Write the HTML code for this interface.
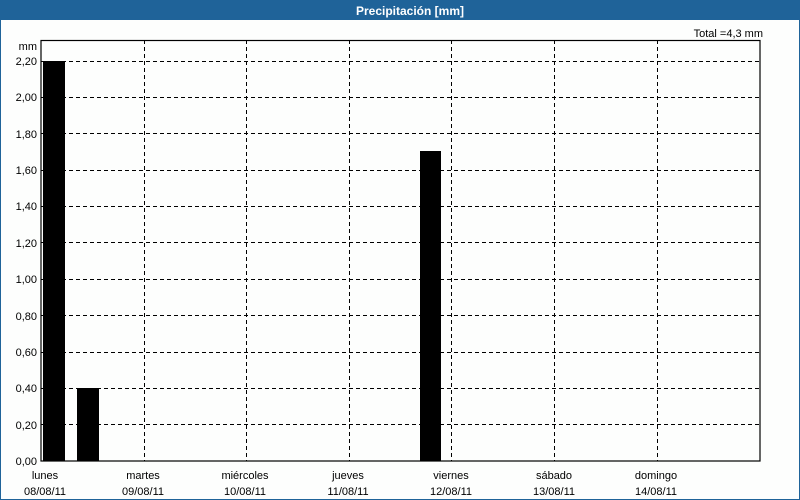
<!DOCTYPE html>
<html><head><style>
html,body{margin:0;padding:0;background:#fff}
svg{display:block}
text{font-family:"Liberation Sans",sans-serif;font-size:11px;fill:#000}
</style></head><body>
<svg width="800" height="500" xmlns="http://www.w3.org/2000/svg">
<rect x="0" y="0" width="800" height="500" fill="#1f6399"/>
<rect x="1" y="20" width="798" height="479" fill="#fdfefd"/>
<text x="410" y="15" text-anchor="middle" style="fill:#fff;font-weight:bold;font-size:12px">Precipitación [mm]</text>
<text x="763" y="37" text-anchor="end">Total =4,3 mm</text>
<text x="37" y="50" text-anchor="end">mm</text>
<g stroke="#000" stroke-width="1" stroke-dasharray="4,3" fill="none">
<path d="M41 61.5H760M41 97.5H760M41 133.5H760M41 170.5H760M41 206.5H760M41 242.5H760M41 279.5H760M41 315.5H760M41 352.5H760M41 388.5H760M41 424.5H760"/>
<path d="M144.5 40V461M246.5 40V461M349.5 40V461M451.5 40V461M554.5 40V461M657.5 40V461"/>
</g>
<g fill="#000">
<rect x="43" y="61" width="22" height="400"/>
<rect x="77" y="388" width="22" height="73"/>
<rect x="420" y="151" width="21" height="310"/>
</g>
<rect x="41" y="40.5" width="719" height="420.5" fill="none" stroke="#000" stroke-width="1.2"/>
<g text-anchor="end">
<text x="37" y="65">2,20</text><text x="37" y="101">2,00</text><text x="37" y="138">1,80</text>
<text x="37" y="174">1,60</text><text x="37" y="210">1,40</text><text x="37" y="247">1,20</text>
<text x="37" y="283">1,00</text><text x="37" y="320">0,80</text><text x="37" y="356">0,60</text>
<text x="37" y="392">0,40</text><text x="37" y="429">0,20</text><text x="37" y="465">0,00</text>
</g>
<g text-anchor="middle">
<text x="45" y="479">lunes</text><text x="45" y="495">08/08/11</text>
<text x="143" y="479">martes</text><text x="143" y="495">09/08/11</text>
<text x="245" y="479">miércoles</text><text x="245" y="495">10/08/11</text>
<text x="348" y="479">jueves</text><text x="348" y="495">11/08/11</text>
<text x="451" y="479">viernes</text><text x="451" y="495">12/08/11</text>
<text x="554" y="479">sábado</text><text x="554" y="495">13/08/11</text>
<text x="656" y="479">domingo</text><text x="656" y="495">14/08/11</text>
</g>
</svg>
</body></html>
